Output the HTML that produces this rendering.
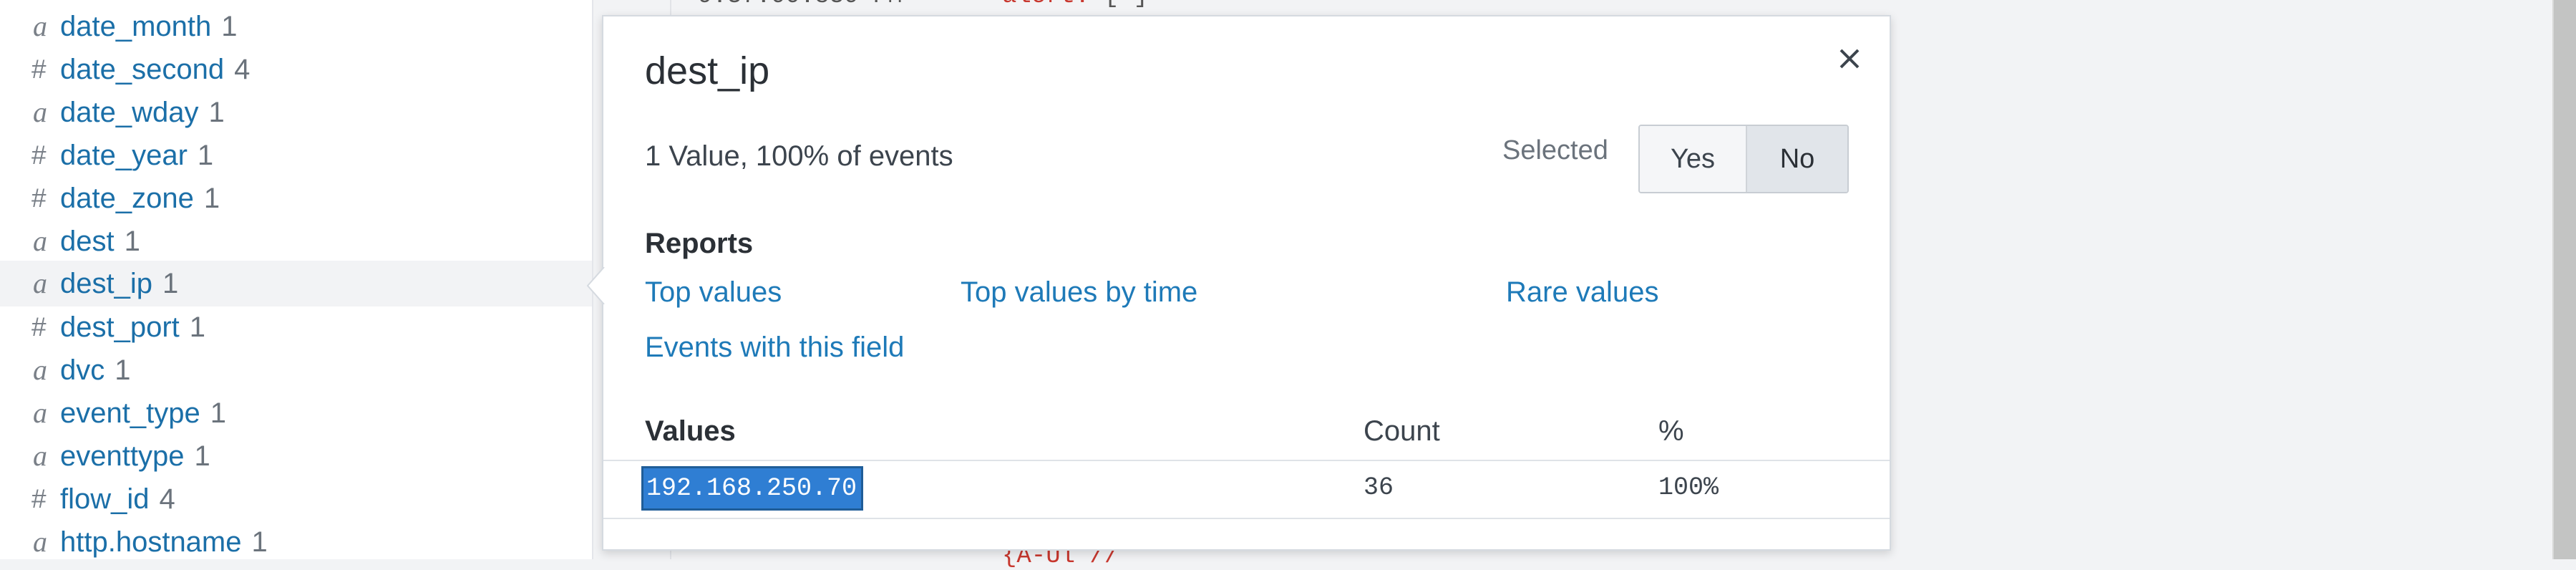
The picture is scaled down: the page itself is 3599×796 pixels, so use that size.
<!DOCTYPE html>
<html><head><meta charset="utf-8"><style>
*{margin:0;padding:0;box-sizing:border-box}
body{width:3599px;height:781px;overflow:hidden;background:#f2f3f5;font-family:"Liberation Sans",sans-serif;position:relative;color:#3c444d}
.abs{position:absolute;white-space:nowrap}
#side{position:absolute;left:0;top:0;width:829px;height:781px;background:#fff;border-right:2px solid #e4e6ea}
.row{position:absolute;left:0;width:827px;height:60px;font-size:40px;line-height:60px}
.row .t{position:absolute;left:46px;color:#7a8088;font-family:"Liberation Serif",serif;font-style:italic;font-size:40px}
.row .t.h{font-family:"Liberation Sans",sans-serif;font-style:normal;font-size:37px;left:44px}
.row .n{position:absolute;left:84px;color:#1b6fa8}
.row .n span{color:#6b737c;margin-left:14px}
#pop{position:absolute;left:841px;top:21px;width:1801px;height:748px;background:#fff;border:2px solid #d5dae0;box-shadow:0 4px 12px rgba(0,0,0,.15)}
.link{color:#1e7ab8;font-size:40px}
.mono{font-family:"Liberation Mono",monospace;font-size:35px}
</style></head><body>
<div class="abs" style="left:936px;top:0;width:2px;height:781px;background:#e2e4e8"></div>
<div class="abs mono" style="left:975px;top:-24px;color:#555;font-size:34px">9:37:00.830 PM</div>
<div class="abs mono" style="left:1400px;top:-24px;color:#c8382f;font-size:34px">alert: <span style="color:#555">[</span><span style="color:#1e7ab8">-</span><span style="color:#555">]</span></div>
<div class="abs mono" style="left:1400px;top:758px;color:#c8382f;font-size:34px">{A-Ul //</div>
<div id="side">
<div class="row" style="top:7px"><span class="t">a</span><span class="n">date_month<span>1</span></span></div>
<div class="row" style="top:67px"><span class="t h">#</span><span class="n">date_second<span>4</span></span></div>
<div class="row" style="top:127px"><span class="t">a</span><span class="n">date_wday<span>1</span></span></div>
<div class="row" style="top:187px"><span class="t h">#</span><span class="n">date_year<span>1</span></span></div>
<div class="row" style="top:247px"><span class="t h">#</span><span class="n">date_zone<span>1</span></span></div>
<div class="row" style="top:307px"><span class="t">a</span><span class="n">dest<span>1</span></span></div>
<div class="row" style="top:364px;height:64px;line-height:64px;background:#f2f3f5"><span class="t">a</span><span class="n">dest_ip<span>1</span></span></div>
<div class="row" style="top:427px"><span class="t h">#</span><span class="n">dest_port<span>1</span></span></div>
<div class="row" style="top:487px"><span class="t">a</span><span class="n">dvc<span>1</span></span></div>
<div class="row" style="top:547px"><span class="t">a</span><span class="n">event_type<span>1</span></span></div>
<div class="row" style="top:607px"><span class="t">a</span><span class="n">eventtype<span>1</span></span></div>
<div class="row" style="top:667px"><span class="t h">#</span><span class="n">flow_id<span>4</span></span></div>
<div class="row" style="top:727px"><span class="t">a</span><span class="n">http.hostname<span>1</span></span></div>
</div>
<div id="pop">
<svg class="abs" style="left:-24px;top:350px" width="26" height="52"><path d="M25 0 L2 26 L25 52" fill="#fff" stroke="#d5dae0" stroke-width="2"/></svg>
<div class="abs" style="left:58px;top:45px;font-size:54px;color:#2b3036">dest_ip</div>
<svg class="abs" style="left:1726px;top:44px" width="30" height="30"><path d="M3 3 L27 27 M27 3 L3 27" stroke="#3c444d" stroke-width="4"/></svg>
<div class="abs" style="left:58px;top:173px;font-size:40px">1 Value, 100% of events</div>
<div class="abs" style="left:1256px;top:166px;font-size:38px;color:#6b737c">Selected</div>
<div class="abs" style="left:1446px;top:151px;width:294px;height:96px;border:2px solid #c8cdd3;border-radius:4px;overflow:hidden;font-size:38px;display:flex">
<div style="width:150px;background:#f5f6f8;text-align:center;line-height:92px;border-right:2px solid #d0d4d9">Yes</div>
<div style="flex:1;background:#e1e5ea;text-align:center;line-height:92px;color:#2b3036">No</div></div>
<div class="abs" style="left:58px;top:295px;font-size:40px;font-weight:bold;color:#2b3036">Reports</div>
<div class="abs link" style="left:58px;top:363px">Top values</div>
<div class="abs link" style="left:499px;top:363px">Top values by time</div>
<div class="abs link" style="left:1261px;top:363px">Rare values</div>
<div class="abs link" style="left:58px;top:440px">Events with this field</div>
<div class="abs" style="left:58px;top:557px;font-size:40px;font-weight:bold;color:#2b3036">Values</div>
<div class="abs" style="left:1062px;top:557px;font-size:40px">Count</div>
<div class="abs" style="left:1474px;top:557px;font-size:40px">%</div>
<div class="abs" style="left:0;top:619px;width:1797px;height:2px;background:#dfe3e8"></div>
<div class="abs mono" style="left:53px;top:628px;width:310px;height:62px;background:#2f7ed3;border:3px solid #1f5d98;color:#fff;line-height:56px;padding-left:4px">192.168.250.70</div>
<div class="abs mono" style="left:1062px;top:638px">36</div>
<div class="abs mono" style="left:1474px;top:638px">100%</div>
<div class="abs" style="left:0;top:700px;width:1797px;height:2px;background:#dfe3e8"></div>
</div>
<div class="abs" style="left:3566px;top:0;width:33px;height:781px;background:#c3c4c3;border-left:2px solid #d8d9d8"></div>
</body></html>
